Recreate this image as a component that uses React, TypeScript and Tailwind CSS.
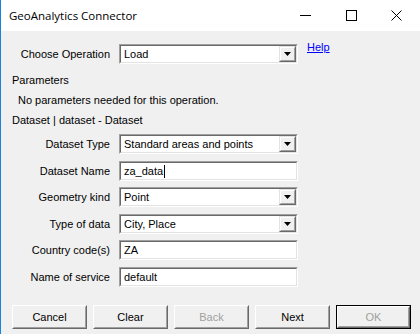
import React from "react";

const font = { fontFamily: '"Liberation Sans", Arial, sans-serif' };

function Sunken({ children }: { children?: React.ReactNode }) {
  // classic 3D sunken edit box
  return (
    <div className="w-[179px] h-[20px] border border-t-[#a0a0a0] border-l-[#a0a0a0] border-b-white border-r-white">
      <div className="w-full h-full border border-t-[#696969] border-l-[#696969] border-b-[#e3e3e3] border-r-[#e3e3e3] bg-white flex items-center">
        {children}
      </div>
    </div>
  );
}

function ArrowButton() {
  return (
    <div className="h-full w-[17px] border border-t-[#e3e3e3] border-l-[#e3e3e3] border-b-[#696969] border-r-[#696969]">
      <div className="w-full h-full border border-t-white border-l-white border-b-[#a0a0a0] border-r-[#a0a0a0] bg-[#f0f0f0] flex items-center justify-center">
        <svg width="7" height="4" viewBox="0 0 7 4">
          <polygon points="0,0 7,0 3.5,4" fill="#000" />
        </svg>
      </div>
    </div>
  );
}

function Combo({ value }: { value: string }) {
  return (
    <Sunken>
      <span className="flex-1 pl-[3px] text-[11px] text-black leading-none">{value}</span>
      <ArrowButton />
    </Sunken>
  );
}

function Row({
  label,
  children,
  className = "",
}: {
  label: string;
  children: React.ReactNode;
  className?: string;
}) {
  return (
    <div className={`flex items-center ${className}`}>
      <div className="w-[118px] text-right text-[11px] text-black pr-[9px]">{label}</div>
      {children}
    </div>
  );
}

function Btn({
  label,
  disabled,
  isDefault,
}: {
  label: string;
  disabled?: boolean;
  isDefault?: boolean;
}) {
  const inner = (
    <div className="w-full h-full border border-t-white border-l-white border-b-[#696969] border-r-[#696969]">
      <div className="w-full h-full border border-t-[#f0f0f0] border-l-[#f0f0f0] border-b-[#a0a0a0] border-r-[#a0a0a0] bg-[#f0f0f0] flex items-center justify-center">
        <span className={`text-[11px] ${disabled ? "text-[#a0a0a0]" : "text-black"}`}>{label}</span>
      </div>
    </div>
  );
  return (
    <div className={`w-[75px] h-[24px] ${isDefault ? "border border-black" : ""}`}>{inner}</div>
  );
}

export default function App() {
  return (
    <div
      className="w-[420px] h-[334px] bg-[#f0f0f0] border-l border-[#1883d7] flex flex-col overflow-hidden"
      style={font}
    >
      {/* Title bar */}
      <div className="h-[31px] bg-white flex items-center shrink-0">
        <span
          className="pl-[8px] text-[11.5px] text-black flex-1"
          style={{ fontFamily: '"Open Sans", "Noto Sans", sans-serif' }}
        >
          GeoAnalytics Connector
        </span>
        <div className="w-[46px] h-full flex items-center justify-center">
          <svg width="11" height="11" viewBox="0 0 11 11">
            <line x1="0" y1="5.5" x2="11" y2="5.5" stroke="#000" strokeWidth="1" />
          </svg>
        </div>
        <div className="w-[46px] h-full flex items-center justify-center">
          <svg width="11" height="11" viewBox="0 0 11 11">
            <rect x="0.5" y="0.5" width="10" height="10" fill="none" stroke="#000" strokeWidth="1" />
          </svg>
        </div>
        <div className="w-[46px] h-full flex items-center justify-center pr-[2px]">
          <svg width="11" height="11" viewBox="0 0 11 11">
            <path d="M0.5 0.5 L10.5 10.5 M10.5 0.5 L0.5 10.5" stroke="#000" strokeWidth="1" />
          </svg>
        </div>
      </div>

      {/* Operation */}
      <div className="flex items-start mt-[13px]">
        <Row label="Choose Operation">
          <Combo value="Load" />
        </Row>
        <a className="ml-[9px] -mt-[5px] text-[11px] text-[#0000ff] underline">Help</a>
      </div>

      <div className="mt-[10px] h-[13px] pl-[11px] text-[11px] text-black leading-[13px]">Parameters</div>
      <div className="mt-[7px] h-[13px] pl-[17px] text-[11px] text-black leading-[13px]">
        No parameters needed for this operation.
      </div>
      <div className="mt-[7px] h-[13px] pl-[11px] text-[11px] text-black leading-[13px]">
        Dataset | dataset - Dataset
      </div>

      <Row label="Dataset Type" className="mt-[7px]">
        <Combo value="Standard areas and points" />
      </Row>
      <Row label="Dataset Name" className="mt-[7px]">
        <Sunken>
          <span className="pl-[3px] text-[11px] text-black leading-none">za_data</span>
          <span className="w-px h-[13px] bg-black ml-[1px]" />
        </Sunken>
      </Row>
      <Row label="Geometry kind" className="mt-[6px]">
        <Combo value="Point" />
      </Row>
      <Row label="Type of data" className="mt-[7px]">
        <Combo value="City, Place" />
      </Row>
      <Row label="Country code(s)" className="mt-[6px]">
        <Sunken>
          <span className="pl-[3px] text-[11px] text-black leading-none">ZA</span>
        </Sunken>
      </Row>
      <Row label="Name of service" className="mt-[7px]">
        <Sunken>
          <span className="pl-[3px] text-[11px] text-black leading-none">default</span>
        </Sunken>
      </Row>

      {/* Buttons */}
      <div className="flex gap-[6px] pl-[11px] mt-[18px]">
        <Btn label="Cancel" />
        <Btn label="Clear" />
        <Btn label="Back" disabled />
        <Btn label="Next" />
        <Btn label="OK" disabled isDefault />
      </div>
    </div>
  );
}
